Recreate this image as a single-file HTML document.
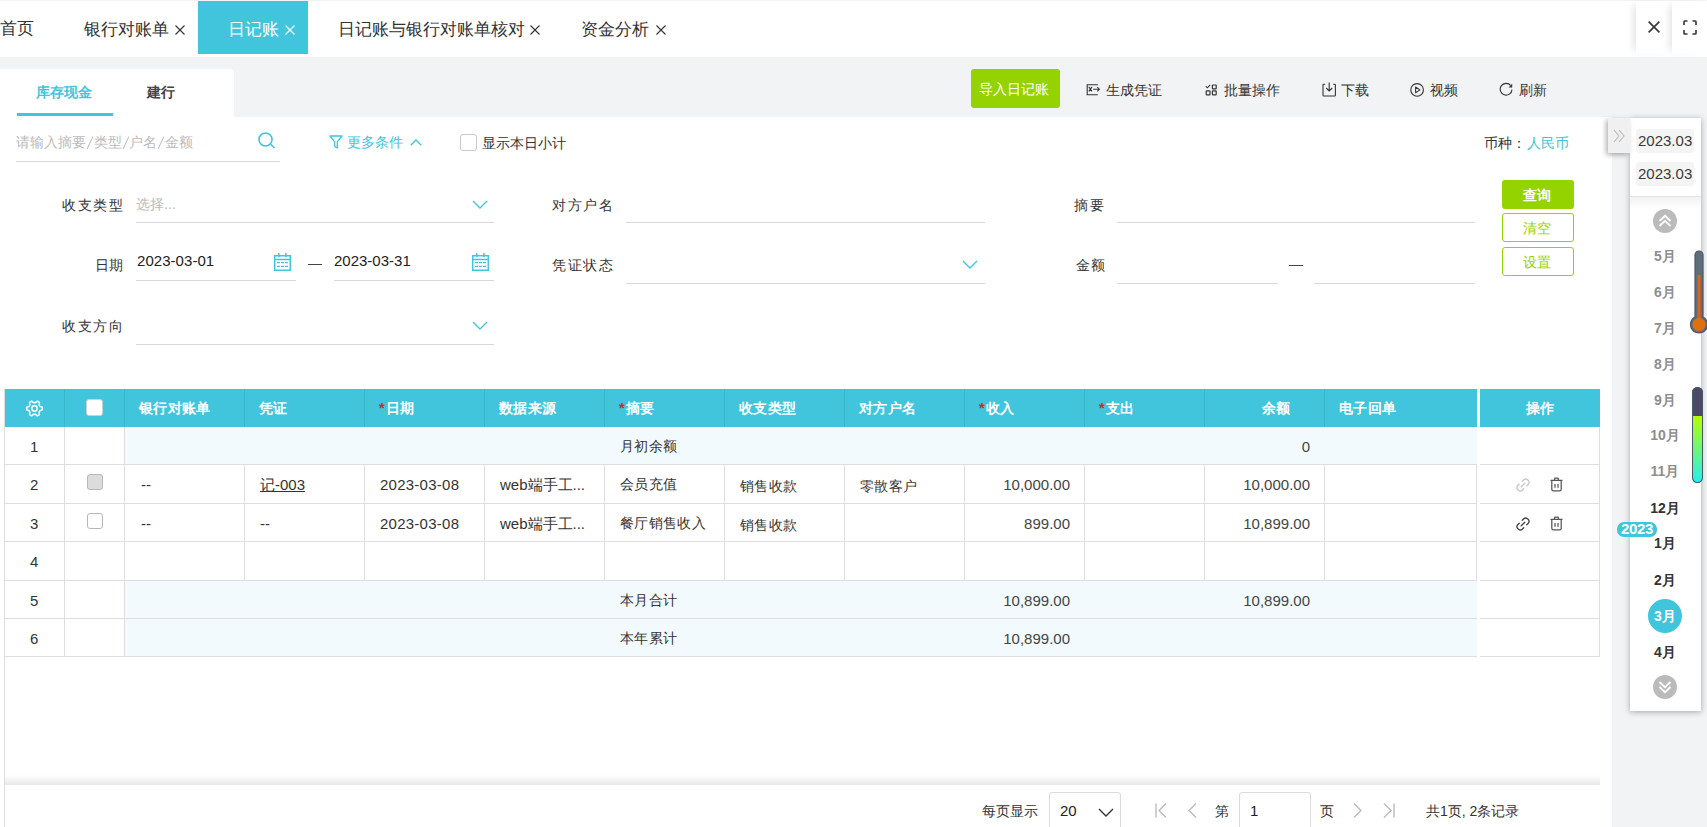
<!DOCTYPE html>
<html><head><meta charset="utf-8">
<style>
*{margin:0;padding:0;box-sizing:border-box}
html,body{width:1707px;height:827px;overflow:hidden;background:#fff;font-family:"Liberation Sans",sans-serif;color:#333}
.a{position:absolute;white-space:nowrap}
.t{position:absolute;white-space:nowrap;line-height:1}
.ul{position:absolute;height:1px;background:#d9d9d9}
.hl{position:absolute;height:1px;background:#dedede}
.vl{position:absolute;width:1px;background:#dedede}
.hv{position:absolute;width:1px;top:389px;height:38px;background:#3ab6cc}
.ht{position:absolute;white-space:nowrap;line-height:1;top:401px;font-size:14px;font-weight:bold;color:#fff;letter-spacing:0.35px}
.ht i{font-style:normal;color:#e2231a;font-size:15px;margin-right:0.5px;line-height:0}
.bt{position:absolute;white-space:nowrap;line-height:1;font-size:14px;color:#333;letter-spacing:0.35px}
.nm{position:absolute;white-space:nowrap;line-height:1;font-size:15px;color:#444}
.mo{position:absolute;white-space:nowrap;line-height:1;font-size:14px;font-weight:bold;color:#8e8e8e;text-align:center;width:60px;left:1635px}
</style></head><body>
<!-- top tab bar -->
<div class="a" style="left:0;top:0;width:1707px;height:1px;background:#f3f3f6"></div>
<div class="a" style="left:0;top:57px;width:1707px;height:60px;background:#f2f3f5"></div>
<div class="a" style="left:198px;top:1px;width:110px;height:53px;background:#40c5dc"></div>
<div class="t" style="left:0;top:20px;font-size:17px;color:#333">首页</div>
<div class="t" style="left:84px;top:20.5px;font-size:17px;color:#333">银行对账单</div>
<div class="t" style="left:228px;top:21px;font-size:17px;color:#fff">日记账</div>
<div class="t" style="left:338px;top:20.5px;font-size:17px;color:#333">日记账与银行对账单核对</div>
<div class="t" style="left:581px;top:20.5px;font-size:17px;color:#333">资金分析</div>
<svg class="a" style="left:175px;top:25px" width="10" height="10" viewBox="0 0 10 10"><path d="M0.5 0.5L9.5 9.5M9.5 0.5L0.5 9.5" stroke="#333" stroke-width="1.1"/></svg>
<svg class="a" style="left:285px;top:25px" width="10" height="10" viewBox="0 0 10 10"><path d="M0.5 0.5L9.5 9.5M9.5 0.5L0.5 9.5" stroke="#fff" stroke-width="1.1"/></svg>
<svg class="a" style="left:530px;top:25px" width="10" height="10" viewBox="0 0 10 10"><path d="M0.5 0.5L9.5 9.5M9.5 0.5L0.5 9.5" stroke="#333" stroke-width="1.1"/></svg>
<svg class="a" style="left:656px;top:25px" width="10" height="10" viewBox="0 0 10 10"><path d="M0.5 0.5L9.5 9.5M9.5 0.5L0.5 9.5" stroke="#333" stroke-width="1.1"/></svg>
<!-- close / fullscreen -->
<div class="a" style="left:1636px;top:1px;width:36px;height:53px;background:#fff;box-shadow:-6px 0 8px -4px rgba(0,0,0,0.12)"></div>
<div class="a" style="left:1672px;top:1px;width:35px;height:53px;background:#fff;box-shadow:-6px 0 8px -4px rgba(0,0,0,0.12)"></div>
<svg class="a" style="left:1648px;top:21px" width="12" height="12" viewBox="0 0 12 12"><path d="M0.6 0.6L11.4 11.4M11.4 0.6L0.6 11.4" stroke="#333" stroke-width="1.5"/></svg>
<svg class="a" style="left:1683px;top:20px" width="14" height="15" viewBox="0 0 14 15"><path d="M1 5V1.8Q1 1 1.8 1H4.5M9.5 1H12.2Q13 1 13 1.8V5M13 10V13.2Q13 14 12.2 14H9.5M4.5 14H1.8Q1 14 1 13.2V10" stroke="#333" stroke-width="1.6" fill="none"/></svg>
<!-- tab panel -->
<div class="a" style="left:0;top:69px;width:234px;height:48px;background:#fff;border-top-right-radius:4px"></div>
<div class="t" style="left:36px;top:85px;font-size:14px;color:#40c5dc;font-weight:bold">库存现金</div>
<div class="t" style="left:147px;top:85px;font-size:14px;color:#444;font-weight:bold">建行</div>
<div class="a" style="left:17px;top:113px;width:96px;height:3px;background:#40c5dc"></div>
<!-- toolbar -->
<div class="a" style="left:971px;top:69px;width:89px;height:39px;background:#95d300;border-radius:3px"></div>
<div class="t" style="left:979px;top:82px;font-size:14px;color:#fff">导入日记账</div>
<div class="t" style="left:1106px;top:83px;font-size:14px;color:#333">生成凭证</div>
<div class="t" style="left:1224px;top:83px;font-size:14px;color:#333">批量操作</div>
<div class="t" style="left:1341px;top:83px;font-size:14px;color:#333">下载</div>
<div class="t" style="left:1430px;top:83px;font-size:14px;color:#333">视频</div>
<div class="t" style="left:1519px;top:83px;font-size:14px;color:#333">刷新</div>
<!-- search row -->
<div class="t" style="left:16px;top:135px;font-size:14px;color:#bbb">请输入摘要<span style="display:inline-block;width:7.6px;height:14px;position:relative;vertical-align:-2px"><svg style="position:absolute;left:0;top:0.5px" width="8" height="14" viewBox="0 0 8 14"><path d="M6.9 0.6L1.1 12.9" stroke="#bbb" stroke-width="1.05"/></svg></span>类型<span style="display:inline-block;width:7.6px;height:14px;position:relative;vertical-align:-2px"><svg style="position:absolute;left:0;top:0.5px" width="8" height="14" viewBox="0 0 8 14"><path d="M6.9 0.6L1.1 12.9" stroke="#bbb" stroke-width="1.05"/></svg></span>户名<span style="display:inline-block;width:7.6px;height:14px;position:relative;vertical-align:-2px"><svg style="position:absolute;left:0;top:0.5px" width="8" height="14" viewBox="0 0 8 14"><path d="M6.9 0.6L1.1 12.9" stroke="#bbb" stroke-width="1.05"/></svg></span>金额</div>
<div class="ul" style="left:16px;top:161px;width:264px"></div>
<svg class="a" style="left:258px;top:132px" width="19" height="17" viewBox="0 0 19 17"><circle cx="7.5" cy="7.5" r="6.5" stroke="#40c5dc" stroke-width="1.6" fill="none"/><path d="M12.5 12L16.5 16" stroke="#40c5dc" stroke-width="1.6"/></svg>
<svg class="a" style="left:329px;top:135px" width="14" height="14" viewBox="0 0 14 14"><path d="M1 1H13L8.3 6.8V13L5.7 11.5V6.8Z" stroke="#40c5dc" stroke-width="1.3" fill="none" stroke-linejoin="round"/></svg>
<div class="t" style="left:347px;top:135px;font-size:14px;color:#40c5dc">更多条件</div>
<svg class="a" style="left:410px;top:139px" width="12" height="7" viewBox="0 0 12 7"><path d="M0.7 6.3L6 1L11.3 6.3" stroke="#40c5dc" stroke-width="1.3" fill="none"/></svg>
<div class="a" style="left:460px;top:134px;width:17px;height:17px;border:1px solid #c8c8c8;border-radius:3px;background:#fff"></div>
<div class="t" style="left:482px;top:136px;font-size:14px;color:#333">显示本日小计</div>
<div class="t" style="left:1484px;top:136px;font-size:14px;color:#333">币种：</div>
<div class="t" style="left:1527px;top:136px;font-size:14px;color:#40c5dc">人民币</div>
<!-- form -->
<div class="t" style="left:62px;top:198px;font-size:14px;color:#333;letter-spacing:1.5px">收支类型</div>
<div class="t" style="left:136px;top:197px;font-size:14px;color:#bbb">选择...</div>
<div class="ul" style="left:136px;top:222px;width:358px"></div>
<svg class="a" style="left:472px;top:200px" width="16" height="9" viewBox="0 0 16 9"><path d="M1 1L8 8L15 1" stroke="#40c5dc" stroke-width="1.4" fill="none"/></svg>
<div class="t" style="left:94.5px;top:258px;font-size:14px;color:#333">日期</div>
<div class="nm" style="left:137px;top:253px;color:#222;letter-spacing:0.05px">2023-03-01</div>
<div class="ul" style="left:136px;top:280px;width:160px"></div>
<div class="a" style="left:308px;top:264px;width:14px;height:1px;background:#444"></div>
<div class="nm" style="left:334px;top:253px;color:#222">2023-03-31</div>
<div class="ul" style="left:334px;top:280px;width:160px"></div>
<div class="t" style="left:62px;top:319px;font-size:14px;color:#333;letter-spacing:1.5px">收支方向</div>
<div class="ul" style="left:136px;top:344px;width:358px"></div>
<svg class="a" style="left:472px;top:321px" width="16" height="9" viewBox="0 0 16 9"><path d="M1 1L8 8L15 1" stroke="#40c5dc" stroke-width="1.4" fill="none"/></svg>
<div class="t" style="left:552px;top:198px;font-size:14px;color:#333;letter-spacing:1.5px">对方户名</div>
<div class="ul" style="left:626px;top:222px;width:359px"></div>
<div class="t" style="left:552px;top:258px;font-size:14px;color:#333;letter-spacing:1.5px">凭证状态</div>
<div class="ul" style="left:626px;top:283px;width:359px"></div>
<svg class="a" style="left:962px;top:260px" width="16" height="9" viewBox="0 0 16 9"><path d="M1 1L8 8L15 1" stroke="#40c5dc" stroke-width="1.4" fill="none"/></svg>
<div class="t" style="left:1074px;top:198px;font-size:14px;color:#333;letter-spacing:1.5px">摘要</div>
<div class="ul" style="left:1117px;top:222px;width:358px"></div>
<div class="t" style="left:1076px;top:258px;font-size:14px;color:#333;letter-spacing:1px">金额</div>
<div class="ul" style="left:1117px;top:283px;width:161px"></div>
<div class="a" style="left:1289px;top:265px;width:14px;height:1px;background:#444"></div>
<div class="ul" style="left:1314px;top:283px;width:161px"></div>
<div class="a" style="left:1502px;top:180px;width:72px;height:29px;background:#95d300;border-radius:3px"></div>
<div class="t" style="left:1523px;top:188px;font-size:14px;color:#fff;font-weight:bold">查询</div>
<div class="a" style="left:1502px;top:213px;width:72px;height:29px;border:1px solid #95d300;border-radius:3px"></div>
<div class="t" style="left:1523px;top:221px;font-size:14px;color:#95d300">清空</div>
<div class="a" style="left:1502px;top:247px;width:72px;height:29px;border:1px solid #95d300;border-radius:3px"></div>
<div class="t" style="left:1523px;top:255px;font-size:14px;color:#95d300">设置</div>
<!-- table -->
<div class="a" style="left:4px;top:389px;width:1473px;height:38px;background:#40c5dc"></div>
<div class="a" style="left:1480px;top:389px;width:120px;height:38px;background:#40c5dc"></div>
<div class="hv" style="left:64px"></div>
<div class="hv" style="left:124px"></div>
<div class="hv" style="left:244px"></div>
<div class="hv" style="left:364px"></div>
<div class="hv" style="left:484px"></div>
<div class="hv" style="left:604px"></div>
<div class="hv" style="left:724px"></div>
<div class="hv" style="left:844px"></div>
<div class="hv" style="left:964px"></div>
<div class="hv" style="left:1084px"></div>
<div class="hv" style="left:1204px"></div>
<div class="hv" style="left:1324px"></div>
<div class="a" style="left:125px;top:427px;width:1352px;height:37px;background:#f2fafd"></div>
<div class="a" style="left:125px;top:581px;width:1352px;height:37px;background:#f2fafd"></div>
<div class="a" style="left:125px;top:619px;width:1352px;height:37px;background:#f2fafd"></div>
<div class="hl" style="left:4px;top:464px;width:1473px"></div>
<div class="hl" style="left:1480px;top:464px;width:120px"></div>
<div class="hl" style="left:4px;top:503px;width:1473px"></div>
<div class="hl" style="left:1480px;top:503px;width:120px"></div>
<div class="hl" style="left:4px;top:541px;width:1473px"></div>
<div class="hl" style="left:1480px;top:541px;width:120px"></div>
<div class="hl" style="left:4px;top:580px;width:1473px"></div>
<div class="hl" style="left:1480px;top:580px;width:120px"></div>
<div class="hl" style="left:4px;top:618px;width:1473px"></div>
<div class="hl" style="left:1480px;top:618px;width:120px"></div>
<div class="hl" style="left:4px;top:656px;width:1473px"></div>
<div class="hl" style="left:1480px;top:656px;width:120px"></div>
<div class="vl" style="left:4px;top:389px;height:438px"></div>
<div class="vl" style="left:64px;top:427px;height:230px"></div>
<div class="vl" style="left:124px;top:427px;height:230px"></div>
<div class="vl" style="left:244px;top:464px;height:117px"></div>
<div class="vl" style="left:364px;top:464px;height:117px"></div>
<div class="vl" style="left:484px;top:464px;height:117px"></div>
<div class="vl" style="left:604px;top:464px;height:117px"></div>
<div class="vl" style="left:724px;top:464px;height:117px"></div>
<div class="vl" style="left:844px;top:464px;height:117px"></div>
<div class="vl" style="left:964px;top:464px;height:117px"></div>
<div class="vl" style="left:1084px;top:464px;height:117px"></div>
<div class="vl" style="left:1204px;top:464px;height:117px"></div>
<div class="vl" style="left:1324px;top:464px;height:117px"></div>
<div class="vl" style="left:1476px;top:464px;height:117px"></div>
<div class="vl" style="left:1599px;top:427px;height:230px"></div>
<!-- header content -->
<svg class="a" style="left:25px;top:399px" width="19" height="19" viewBox="0 0 24 24"><path d="M21.90 12.00 L21.87 12.65 L21.73 13.28 L21.33 13.86 L20.31 14.23 L19.28 14.47 L18.82 14.82 L18.56 15.23 L18.32 15.65 L18.08 16.06 L17.86 16.49 L17.78 17.07 L18.08 18.08 L18.27 19.15 L17.98 19.79 L17.49 20.22 L16.95 20.57 L16.37 20.87 L15.76 21.07 L15.06 21.01 L14.23 20.31 L13.50 19.54 L12.96 19.32 L12.48 19.30 L12.00 19.30 L11.52 19.30 L11.04 19.32 L10.50 19.54 L9.77 20.31 L8.94 21.01 L8.24 21.07 L7.63 20.87 L7.05 20.57 L6.51 20.22 L6.02 19.79 L5.73 19.15 L5.92 18.08 L6.22 17.07 L6.14 16.49 L5.92 16.06 L5.68 15.65 L5.44 15.23 L5.18 14.82 L4.72 14.47 L3.69 14.23 L2.67 13.86 L2.27 13.28 L2.13 12.65 L2.10 12.00 L2.13 11.35 L2.27 10.72 L2.67 10.14 L3.69 9.77 L4.72 9.53 L5.18 9.18 L5.44 8.77 L5.68 8.35 L5.92 7.94 L6.14 7.51 L6.22 6.93 L5.92 5.92 L5.73 4.85 L6.02 4.21 L6.51 3.78 L7.05 3.43 L7.63 3.13 L8.24 2.93 L8.94 2.99 L9.77 3.69 L10.50 4.46 L11.04 4.68 L11.52 4.70 L12.00 4.70 L12.48 4.70 L12.96 4.68 L13.50 4.46 L14.23 3.69 L15.06 2.99 L15.76 2.93 L16.37 3.13 L16.95 3.43 L17.49 3.78 L17.98 4.21 L18.27 4.85 L18.08 5.92 L17.78 6.93 L17.86 7.51 L18.08 7.94 L18.32 8.35 L18.56 8.77 L18.82 9.18 L19.28 9.53 L20.31 9.77 L21.33 10.14 L21.73 10.72 L21.87 11.35Z" fill="none" stroke="#fff" stroke-width="1.9" stroke-linejoin="round"/><circle cx="12" cy="12" r="3.4" fill="none" stroke="#fff" stroke-width="1.9"/></svg>
<div class="a" style="left:86px;top:399px;width:17px;height:17px;background:#fff;border:1px solid #d0d0d0;border-radius:3px"></div>
<div class="ht" style="left:139px">银行对账单</div>
<div class="ht" style="left:259px">凭证</div>
<div class="ht" style="left:379px"><i>*</i>日期</div>
<div class="ht" style="left:499px">数据来源</div>
<div class="ht" style="left:619px"><i>*</i>摘要</div>
<div class="ht" style="left:739px">收支类型</div>
<div class="ht" style="left:859px">对方户名</div>
<div class="ht" style="left:979px"><i>*</i>收入</div>
<div class="ht" style="left:1099px"><i>*</i>支出</div>
<div class="ht" style="left:1262px">余额</div>
<div class="ht" style="left:1339px">电子回单</div>
<div class="ht" style="left:1526px">操作</div>

<!-- body content -->
<div class="nm" style="left:30px;top:439px;color:#333">1</div>
<div class="nm" style="left:30px;top:477px;color:#333">2</div>
<div class="nm" style="left:30px;top:516px;color:#333">3</div>
<div class="nm" style="left:30px;top:554px;color:#333">4</div>
<div class="nm" style="left:30px;top:593px;color:#333">5</div>
<div class="nm" style="left:30px;top:631px;color:#333">6</div>

<div class="bt" style="left:620px;top:439px">月初余额</div>
<div class="nm" style="left:1240px;top:439px;width:70px;text-align:right">0</div>

<div class="a" style="left:87px;top:474px;width:16px;height:16px;background:#dcdcdc;border:1px solid #b8b8b8;border-radius:3px"></div>
<div class="nm" style="left:141px;top:477px;color:#333">--</div>
<div class="nm" style="left:260px;top:477px;color:#333;text-decoration:underline">记-003</div>
<div class="nm" style="left:380px;top:477px;color:#333;letter-spacing:0.25px">2023-03-08</div>
<div class="nm" style="left:500px;top:477px;color:#333">web端手工...</div>
<div class="bt" style="left:620px;top:477px">会员充值</div>
<div class="bt" style="left:740px;top:479px">销售收款</div>
<div class="bt" style="left:860px;top:479px">零散客户</div>
<div class="nm" style="left:980px;top:477px;width:90px;text-align:right">10,000.00</div>
<div class="nm" style="left:1220px;top:477px;width:90px;text-align:right">10,000.00</div>

<div class="a" style="left:87px;top:513px;width:16px;height:16px;background:#fff;border:1px solid #b8b8b8;border-radius:3px"></div>
<div class="nm" style="left:141px;top:516px;color:#333">--</div>
<div class="nm" style="left:260px;top:516px;color:#333">--</div>
<div class="nm" style="left:380px;top:516px;color:#333;letter-spacing:0.25px">2023-03-08</div>
<div class="nm" style="left:500px;top:516px;color:#333">web端手工...</div>
<div class="bt" style="left:620px;top:516px">餐厅销售收入</div>
<div class="bt" style="left:740px;top:518px">销售收款</div>
<div class="nm" style="left:980px;top:516px;width:90px;text-align:right">899.00</div>
<div class="nm" style="left:1220px;top:516px;width:90px;text-align:right">10,899.00</div>

<div class="bt" style="left:620px;top:593px">本月合计</div>
<div class="nm" style="left:980px;top:593px;width:90px;text-align:right">10,899.00</div>
<div class="nm" style="left:1220px;top:593px;width:90px;text-align:right">10,899.00</div>
<div class="bt" style="left:620px;top:631px">本年累计</div>
<div class="nm" style="left:980px;top:631px;width:90px;text-align:right">10,899.00</div>

<!-- action icons -->
<svg class="a" style="left:1515px;top:477px" width="16" height="16" viewBox="0 0 16 16"><path d="M6.2 9.8L9.8 6.2M7.3 4.2L8.8 2.7a2.6 2.6 0 0 1 3.7 0l0.8 0.8a2.6 2.6 0 0 1 0 3.7L11.8 8.7M8.7 11.8L7.2 13.3a2.6 2.6 0 0 1-3.7 0l-0.8-0.8a2.6 2.6 0 0 1 0-3.7L4.2 7.3" stroke="#c8c8c8" stroke-width="1.4" fill="none" stroke-linecap="round"/></svg>
<svg class="a" style="left:1550px;top:477px" width="13" height="15" viewBox="0 0 13 15"><path d="M0.5 3.4H12.5M4.6 3.2V1.8Q4.6 1.1 5.3 1.1H7.7Q8.4 1.1 8.4 1.8V3.2M1.8 3.8V12.3Q1.8 13.9 3.4 13.9H9.6Q11.2 13.9 11.2 12.3V3.8M5 7V10.8M8 7V10.8" stroke="#555" stroke-width="1.25" fill="none"/></svg>
<svg class="a" style="left:1515px;top:516px" width="16" height="16" viewBox="0 0 16 16"><path d="M6.2 9.8L9.8 6.2M7.3 4.2L8.8 2.7a2.6 2.6 0 0 1 3.7 0l0.8 0.8a2.6 2.6 0 0 1 0 3.7L11.8 8.7M8.7 11.8L7.2 13.3a2.6 2.6 0 0 1-3.7 0l-0.8-0.8a2.6 2.6 0 0 1 0-3.7L4.2 7.3" stroke="#444" stroke-width="1.4" fill="none" stroke-linecap="round"/></svg>
<svg class="a" style="left:1550px;top:516px" width="13" height="15" viewBox="0 0 13 15"><path d="M0.5 3.4H12.5M4.6 3.2V1.8Q4.6 1.1 5.3 1.1H7.7Q8.4 1.1 8.4 1.8V3.2M1.8 3.8V12.3Q1.8 13.9 3.4 13.9H9.6Q11.2 13.9 11.2 12.3V3.8M5 7V10.8M8 7V10.8" stroke="#555" stroke-width="1.25" fill="none"/></svg>

<!-- pagination shadow -->
<div class="a" style="left:5px;top:775px;width:1595px;height:10px;background:linear-gradient(to bottom,rgba(0,0,0,0),rgba(0,0,0,0.09))"></div>
<div class="t" style="left:982px;top:804px;font-size:14px;color:#333">每页显示</div>
<div class="a" style="left:1049px;top:792px;width:72px;height:40px;border:1px solid #dcdcdc;border-radius:3px;background:#fff"></div>
<div class="nm" style="left:1060px;top:803px;color:#222">20</div>
<svg class="a" style="left:1098px;top:808px" width="16" height="9" viewBox="0 0 16 9"><path d="M1 1L8 8L15 1" stroke="#333" stroke-width="1.4" fill="none"/></svg>
<svg class="a" style="left:1155px;top:803px" width="12" height="15" viewBox="0 0 12 15"><path d="M1 0.5V14.5M11 0.5L4 7.5L11 14.5" stroke="#bbb" stroke-width="1.4" fill="none"/></svg>
<svg class="a" style="left:1187px;top:803px" width="10" height="15" viewBox="0 0 10 15"><path d="M9 0.5L2 7.5L9 14.5" stroke="#bbb" stroke-width="1.4" fill="none"/></svg>
<div class="t" style="left:1215px;top:804px;font-size:14px;color:#333">第</div>
<div class="a" style="left:1239px;top:792px;width:72px;height:40px;border:1px solid #dcdcdc;border-radius:3px;background:#fff"></div>
<div class="nm" style="left:1250px;top:803px;color:#222">1</div>
<div class="t" style="left:1320px;top:804px;font-size:14px;color:#333">页</div>
<svg class="a" style="left:1353px;top:803px" width="10" height="15" viewBox="0 0 10 15"><path d="M1 0.5L8 7.5L1 14.5" stroke="#bbb" stroke-width="1.4" fill="none"/></svg>
<svg class="a" style="left:1383px;top:803px" width="12" height="15" viewBox="0 0 12 15"><path d="M11 0.5V14.5M1 0.5L8 7.5L1 14.5" stroke="#bbb" stroke-width="1.4" fill="none"/></svg>
<div class="t" style="left:1426px;top:804px;font-size:14px;color:#333">共1页, 2条记录</div>

<!-- side gray strip -->
<div class="a" style="left:1612px;top:117px;width:95px;height:710px;background:#f2f3f5"></div>
<!-- toolbar icons -->
<svg class="a" style="left:1086px;top:84px" width="15" height="12" viewBox="0 0 15 12"><path d="M11.8 0.7H1.2V10.8H11.8" stroke="#333" stroke-width="1.1" fill="none"/><path d="M2.8 2.9L6 7.4M6 2.9L2.8 7.4M7.2 5.2H13.4M11.3 3.1L13.4 5.2L11.3 7.3" stroke="#333" stroke-width="1.05" fill="none"/></svg>
<svg class="a" style="left:1205px;top:84px" width="13" height="12" viewBox="0 0 13 12"><path d="M0.8 2.4L2.4 3.8L5.2 0.9" stroke="#333" stroke-width="1.1" fill="none"/><rect x="7.4" y="1" width="3.8" height="3.8" rx="0.6" stroke="#333" stroke-width="1.2" fill="none"/><rect x="1.2" y="6.8" width="3.8" height="4" rx="0.6" stroke="#333" stroke-width="1.2" fill="none"/><rect x="7.4" y="6.8" width="3.8" height="4" rx="0.6" stroke="#333" stroke-width="1.2" fill="none"/></svg>
<svg class="a" style="left:1322px;top:82px" width="15" height="15" viewBox="0 0 15 15"><path d="M3.2 2.2H1.8Q1 2.2 1 3V13.2Q1 14 1.8 14H12.6Q13.4 14 13.4 13.2V3Q13.4 2.2 12.6 2.2H11.2" stroke="#333" stroke-width="1.1" fill="none"/><path d="M7.2 0.6V9M4.2 6L7.2 9L10.2 6" stroke="#333" stroke-width="1.1" fill="none"/></svg>
<svg class="a" style="left:1410px;top:83px" width="15" height="15" viewBox="0 0 15 15"><circle cx="7.1" cy="6.9" r="6.3" stroke="#333" stroke-width="1.1" fill="none"/><path d="M5.6 4V9.8L10 6.9Z" stroke="#333" stroke-width="1.05" fill="none" stroke-linejoin="round"/></svg>
<svg class="a" style="left:1499px;top:82px" width="15" height="15" viewBox="0 0 15 15"><path d="M13 7.6A5.9 5.9 0 1 1 11.6 3.4" stroke="#333" stroke-width="1.1" fill="none"/><path d="M13.2 1.8V5.6H9.6Z" fill="#333"/></svg>
<!-- calendar icons -->
<svg class="a" style="left:273px;top:252px" width="19" height="20" viewBox="0 0 19 20"><path d="M1.7 3.7H17.3V18.2H1.7Z M1.7 7.4H17.3" stroke="#40c5dc" stroke-width="1.5" fill="none"/><path d="M5.8 1V5.2M12.9 1V5.2" stroke="#40c5dc" stroke-width="1.5"/><path d="M4 10.7H7M8 10.7H11M12 10.7H15M4 14.3H7M8 14.3H11M12 14.3H15" stroke="#40c5dc" stroke-width="1.3"/></svg>
<svg class="a" style="left:471px;top:252px" width="19" height="20" viewBox="0 0 19 20"><path d="M1.7 3.7H17.3V18.2H1.7Z M1.7 7.4H17.3" stroke="#40c5dc" stroke-width="1.5" fill="none"/><path d="M5.8 1V5.2M12.9 1V5.2" stroke="#40c5dc" stroke-width="1.5"/><path d="M4 10.7H7M8 10.7H11M12 10.7H15M4 14.3H7M8 14.3H11M12 14.3H15" stroke="#40c5dc" stroke-width="1.3"/></svg>

<!-- side panel -->
<div class="a" style="left:1630px;top:118px;width:71px;height:593px;background:#fff;box-shadow:0 1px 6px rgba(0,0,0,0.32)"></div>
<div class="a" style="left:1608px;top:118px;width:22px;height:35px;background:#f0f0f0;box-shadow:-2px 2px 5px rgba(0,0,0,0.3)"></div>
<svg class="a" style="left:1613px;top:129px" width="12" height="14" viewBox="0 0 12 14"><path d="M1 1L6 7L1 13M6 1L11 7L6 13" stroke="#bbb" stroke-width="1.1" fill="none"/></svg>
<div class="a" style="left:1636px;top:129px;width:58px;height:24px;background:#f4f4f4;border-radius:3px"></div>
<div class="a" style="left:1636px;top:162px;width:58px;height:24px;background:#f4f4f4;border-radius:3px"></div>
<div class="nm" style="left:1638px;top:133px;color:#3a3a3a">2023.03</div>
<div class="nm" style="left:1638px;top:166px;color:#3a3a3a">2023.03</div>
<div class="a" style="left:1630px;top:196px;width:71px;height:1px;background:#e4e4e4"></div>
<div class="a" style="left:1630px;top:197px;width:71px;height:12px;background:linear-gradient(to bottom,rgba(0,0,0,0.05),rgba(0,0,0,0))"></div>
<svg class="a" style="left:1653px;top:209px" width="24" height="24" viewBox="0 0 24 24"><circle cx="12" cy="12" r="12" fill="#bbb"/><path d="M6.5 12L12 6.8L17.5 12M6.5 17L12 11.8L17.5 17" stroke="#fff" stroke-width="1.8" fill="none"/></svg>
<div class="mo" style="top:249px">5月</div>
<div class="mo" style="top:285px">6月</div>
<div class="mo" style="top:321px">7月</div>
<div class="mo" style="top:357px">8月</div>
<div class="mo" style="top:393px">9月</div>
<div class="mo" style="top:428px">10月</div>
<div class="mo" style="top:464px">11月</div>
<div class="mo" style="top:501px;color:#333">12月</div>
<div class="mo" style="top:536px;color:#333">1月</div>
<div class="mo" style="top:573px;color:#333">2月</div>
<div class="a" style="left:1648px;top:599px;width:34px;height:34px;border-radius:50%;background:#40c5dc"></div>
<div class="mo" style="top:609px;color:#fff">3月</div>
<div class="mo" style="top:645px;color:#333">4月</div>
<svg class="a" style="left:1653px;top:675px" width="24" height="24" viewBox="0 0 24 24"><circle cx="12" cy="12" r="12" fill="#bbb"/><path d="M6.5 7L12 12.2L17.5 7M6.5 12L12 17.2L17.5 12" stroke="#fff" stroke-width="1.8" fill="none"/></svg>
<!-- thermometer -->
<svg class="a" style="left:1689px;top:250px" width="18" height="86" viewBox="0 0 18 86"><path d="M6 5A4 4 0 0 1 14 5V67A8.5 8.5 0 1 1 6 67Z" fill="#5f6e7b" stroke="#4b5864" stroke-width="1.2"/><path d="M8.4 25H11.6V72H8.4Z" fill="#e0601a"/><circle cx="10" cy="74.6" r="6.5" fill="#e0700e"/></svg>
<!-- battery -->
<div class="a" style="left:1692px;top:387px;width:11px;height:96px;border-radius:6px;background:linear-gradient(to bottom,#4a4a68 0,#4a4a68 29px,#b4ff00 29px,#22f0f0 100%);box-shadow:0 0 0 1px #4a5a6a inset"></div>
<!-- 2023 badge -->
<div class="a" style="left:1617px;top:522px;width:40px;height:15px;border-radius:7px;background:#40c5dc;color:#fff;font-size:15px;font-weight:bold;line-height:13px;text-align:center;letter-spacing:-0.4px">2023</div>

</body></html>
